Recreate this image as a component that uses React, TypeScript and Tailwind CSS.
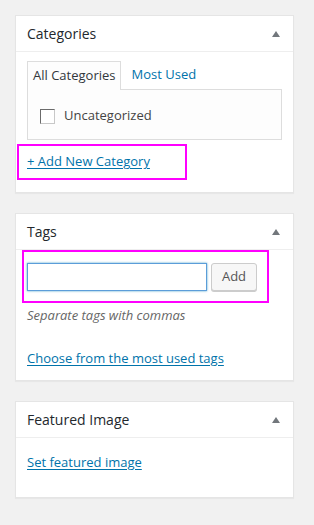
const FONT = { fontFamily: '"Open Sans", "Liberation Sans", sans-serif' };

function Toggle() {
  return (
    <svg width="8" height="6" viewBox="0 0 8 6" className="shrink-0">
      <path d="M0 6 L4 0 L8 6 Z" fill="#72777c" />
    </svg>
  );
}

function Box({ title, children }: { title: string; children: React.ReactNode }) {
  return (
    <div className="ml-[15px] w-[279px] bg-white border border-[#e5e5e5] shadow-[0_1px_1px_rgba(0,0,0,0.04)]">
      <div className="h-[36px] flex items-center justify-between pl-[11px] pr-[13px] border-b border-[#eeeeee]">
        <h2 className="text-[14px] text-[#23282d] leading-none">{title}</h2>
        <Toggle />
      </div>
      {children}
    </div>
  );
}

export default function App() {
  return (
    <div className="w-[314px] h-[525px] bg-[#f1f1f1] pt-[15px] flex flex-col gap-[20px] overflow-hidden" style={FONT}>
      <Box title="Categories">
        <div className="pl-[11px] pr-[11px] pt-[8px] pb-[12px]">
          <div className="flex items-end h-[29px]">
            <div className="h-[29px] px-[5px] flex items-center border border-b-0 border-[#dddddd] bg-[#fdfdfd] text-[13px] text-[#32373c] relative z-10 -mb-px">
              All Categories
            </div>
            <a className="h-[29px] px-[10px] flex items-center text-[13px] text-[#0073aa]">Most Used</a>
          </div>
          <div className="h-[51px] border border-[#dddddd] bg-[#fdfdfd] flex items-center pl-[12px] pt-[3px]">
            <span className="w-[15px] h-[15px] border border-t-[#6b6b6b] border-l-[#6b6b6b] border-r-[#c8c8c8] border-b-[#c8c8c8] bg-white" />
            <span className="ml-[9px] text-[13px] text-[#444444]">Uncategorized</span>
          </div>
          <div className="-ml-[10px] mt-[4px] w-[170px] h-[36px] border-2 border-[#ff00ff] flex items-center pl-[8px]">
            <a className="text-[13px] text-[#0073aa] underline underline-offset-2">+ Add New Category</a>
          </div>
        </div>
      </Box>

      <Box title="Tags">
        <div className="pl-[6px] pb-[12px]">
          <div className="w-[247px] h-[53px] border-2 border-[#ff00ff] flex items-start gap-[4px] pl-[3px] pt-[11px]">
            <input
              type="text"
              className="w-[180px] h-[28px] border border-[#5b9dd9] bg-white shadow-[0_0_2px_rgba(30,140,190,0.8)] outline-none"
            />
            <button className="w-[46px] h-[28px] border border-[#cccccc] rounded-[3px] bg-[#f7f7f7] text-[13px] text-[#555555] shadow-[0_1px_0_#cccccc]">
              Add
            </button>
          </div>
          <p className="mt-[2px] pl-[5px] text-[13px] italic text-[#666666] leading-[20px]">Separate tags with commas</p>
          <a className="block mt-[23px] pl-[5px] text-[13px] text-[#0073aa] underline underline-offset-2 leading-[20px]">
            Choose from the most used tags
          </a>
        </div>
      </Box>

      <Box title="Featured Image">
        <div className="pl-[11px] pt-[14px] pb-[25px]">
          <a className="block text-[13px] text-[#0073aa] underline underline-offset-2 leading-[20px]">Set featured image</a>
        </div>
      </Box>
    </div>
  );
}
